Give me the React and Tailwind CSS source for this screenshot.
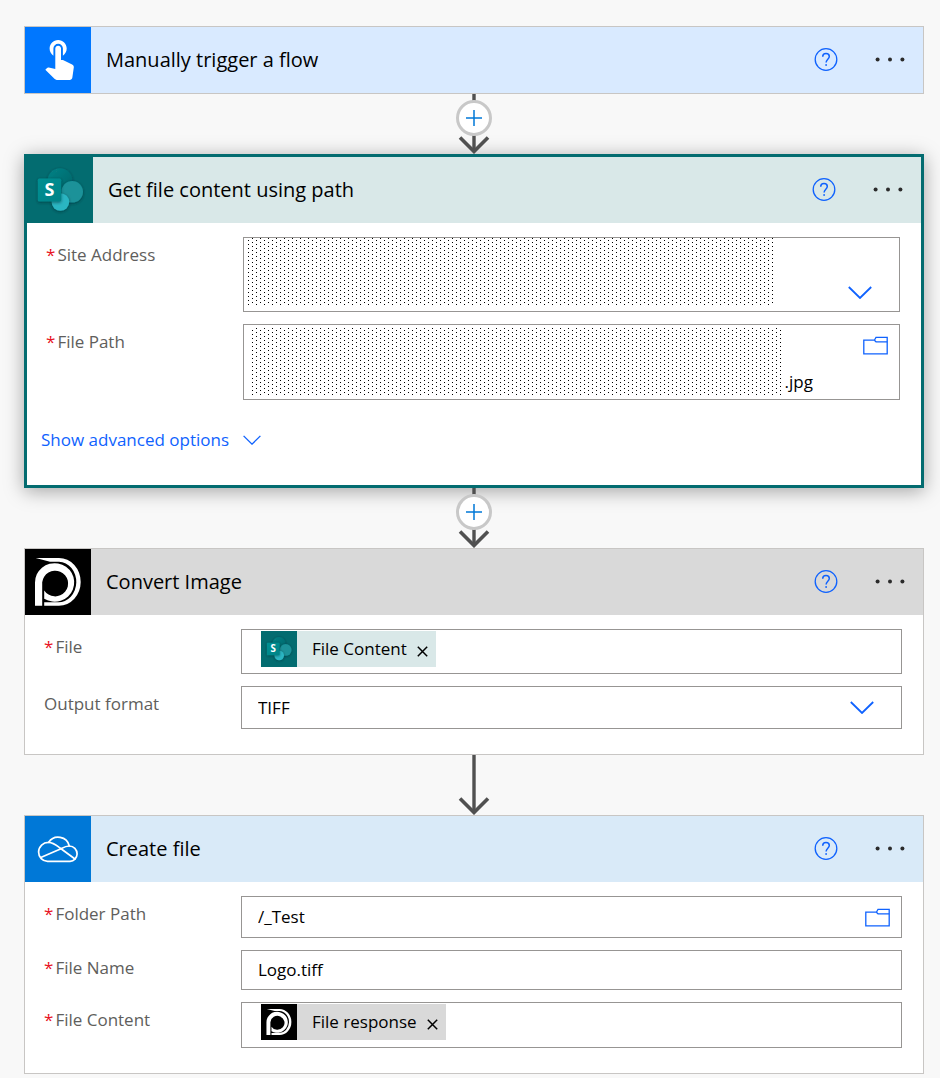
import React, { useId } from 'react';

const SharePointIcon = ({ className }) => {
  const id = useId();

  return (
    <svg viewBox="0 0 66 66" className={className} aria-hidden="true">
      <defs>
        <filter id={`${id}shadow`} x="-30%" y="-30%" width="160%" height="160%">
          <feDropShadow dx="0" dy="1" stdDeviation="1.6" floodColor="#00282a" floodOpacity="0.6" />
        </filter>
        <linearGradient id={`${id}square`} x1="0" y1="0" x2="1" y2="1">
          <stop offset="0" stopColor="#058f92" />
          <stop offset="1" stopColor="#038387" />
        </linearGradient>
        <linearGradient id={`${id}back`} x1="0" y1="0" x2="1" y2="1">
          <stop offset="0" stopColor="#078286" />
          <stop offset="1" stopColor="#036367" />
        </linearGradient>
      </defs>
      <rect width="66" height="66" fill="#036c70" />
      <circle cx="33" cy="23.5" r="12.3" fill={`url(#${id}back)`} filter={`url(#${id}shadow)`} />
      <circle cx="45.2" cy="34.8" r="10.8" fill="#1a9299" filter={`url(#${id}shadow)`} />
      <circle cx="33.4" cy="45" r="8.8" fill="#2bb5c2" filter={`url(#${id}shadow)`} />
      <rect x="10.8" y="21.6" width="23.4" height="23" rx="1.6" fill={`url(#${id}square)`} filter={`url(#${id}shadow)`} />
      <text x="22.4" y="39.4" textAnchor="middle" fontFamily="Open Sans, sans-serif" fontWeight="700" fontSize="18" fill="#fff">S</text>
    </svg>
  );
};

const TouchIcon = ({ className }) => (
  <svg viewBox="0 0 66 66" className={className} aria-hidden="true">
    <rect width="66" height="66" fill="#0077ff" />
    <path
      transform="translate(11.3 7.3) scale(1.9)"
      fill="#fff"
      d="M9 11.24V7.5a2.5 2.5 0 0 1 5 0v3.74c1.21-.81 2-2.18 2-3.74C16 5.01 13.99 3 11.5 3S7 5.01 7 7.5c0 1.56.79 2.93 2 3.74zm9.84 4.63l-4.54-2.26c-.17-.07-.35-.11-.54-.11H13v-6c0-.83-.67-1.5-1.5-1.5S10 6.67 10 7.5v10.74l-3.43-.72c-.08-.01-.15-.03-.24-.03-.31 0-.59.13-.79.33l-.79.8 4.94 4.94c.27.27.65.44 1.06.44h6.79c.75 0 1.33-.55 1.44-1.28l.75-5.27c.01-.07.02-.14.02-.2 0-.62-.38-1.16-.91-1.38z"
    />
  </svg>
);

const ConverterIcon = ({ className }) => (
  <svg viewBox="0 0 66 66" className={className} aria-hidden="true">
    <rect width="66" height="66" fill="#000" />
    <g fill="#fff">
      {/* ring with its stem */}
      <path d="M10 56.8V33.6a19.6 19.3 0 1 1 9.2 16.2V41.5a13 12.8 0 1 0-2-8.2v23.5z" />
      {/* outer swoosh */}
      <path d="M10.7 9H34a21.7 23.9 0 0 1 0 47.8H19.2V53.2H33a17.8 20.2 0 0 0 1-40.4H25z" />
    </g>
  </svg>
);

const OneDriveIcon = ({ className }) => (
  <svg viewBox="0 0 66 66" className={className} aria-hidden="true">
    <rect width="66" height="66" fill="#0078d7" />
    <g fill="none" stroke="#fff" strokeWidth="1.7" strokeLinejoin="round" strokeLinecap="round">
      <path d="M23.7 26.3A9.8 9.8 0 0 0 13.6 36C13.6 41.5 17.5 45.3 22.5 45.3H45A7.5 7.5 0 0 0 52.1 38C52.1 33.5 48.8 30 44.3 30A11.4 11.4 0 0 0 23.7 26.3z" />
      <path d="M23.7 26.3C28.5 26.6 31 29 35 32L50 43" />
      <path d="M16.3 41.3L36 32.7C38.5 31.4 41 30 44.3 30" />
    </g>
  </svg>
);

const Chevron = ({ className }) => (
  <svg viewBox="0 0 24 13" fill="none" stroke="#0f62fe" strokeWidth="1.8" className={className} aria-hidden="true">
    <path d="M.8 1l11.2 11L23.2 1" />
  </svg>
);

const FolderButton = ({ label }) => (
  <button type="button" aria-label={label} className="mr-[11px] mt-[11px] shrink-0 self-start">
    <svg width="25" height="19" viewBox="0 0 25 19" fill="none" stroke="#0f62fe" strokeWidth="1.3" className="block">
      <path d="M.8 4.2h10.6L13 1.4h11.2v16.4H.8z" />
      <path d="M11.4 4.2L13 5.8h11.2" />
    </svg>
  </button>
);

// stippled cover over the private part of a value
const Stipple = ({ id, className }) => (
  <svg className={className} shapeRendering="crispEdges" aria-hidden="true">
    <defs>
      <pattern id={id} width="8" height="4" patternUnits="userSpaceOnUse">
        <rect x="0" y="2" width="1" height="1" fill="#000" />
        <rect x="4" y="0" width="1" height="1" fill="#000" />
      </pattern>
    </defs>
    <rect width="100%" height="100%" fill={`url(#${id})`} />
  </svg>
);

const Card = ({ title, icon: Icon, tint, selected, children }) => (
  <section
    className={
      selected
        ? 'border-[3px] border-[#036c70] bg-white shadow-[0_3px_18px_rgba(0,0,0,0.35)]'
        : 'border border-[#c8c6c4] bg-white'
    }
  >
    <header className={`flex items-center ${tint}`}>
      <Icon className="block size-[66px] shrink-0" />
      <h2 className="flex-1 pl-[15px] text-[20px] leading-7 text-black">{title}</h2>
      <button type="button" aria-label={`Help for ${title}`} className="mr-9">
        <svg width="24" height="24" viewBox="0 0 24 24" fill="none" stroke="#0f62fe" className="block">
          <circle cx="12" cy="11.5" r="10.8" strokeWidth="1.3" />
          <path d="M8.7 8.7C8.7 6.7 10.1 5.6 12 5.6s3.3 1.1 3.3 3c0 2.7-3.2 2.8-3.2 6" strokeWidth="1.5" />
          <circle cx="12.1" cy="17" r=".9" fill="#0f62fe" stroke="none" />
        </svg>
      </button>
      <button type="button" aria-label={`Menu for ${title}`} className="mr-[17px]">
        <svg width="32" height="24" viewBox="0 0 32 24" fill="#2b2b2b" className="block">
          <circle cx="3.6" cy="11.5" r="2" />
          <circle cx="16" cy="11.5" r="2" />
          <circle cx="28.4" cy="11.5" r="2" />
        </svg>
      </button>
    </header>
    {children && <div className="flex flex-col gap-3 pt-[14px] pr-[21px] pb-[25px] pl-[19px]">{children}</div>}
  </section>
);

const Field = ({ id, label, required, height, children }) => (
  <div className="flex">
    <label htmlFor={id} className="w-[197px] shrink-0 pt-[7px] text-[17px] leading-[22px] text-[#605e5c]">
      {required && <span className="mr-[2px] text-[#e81123]">*</span>}
      {label}
    </label>
    <div className={`flex min-w-0 flex-1 border border-[#979593] bg-white ${height}`}>{children}</div>
  </div>
);

const TextInput = ({ id, value }) => (
  <input
    id={id}
    type="text"
    defaultValue={value}
    className="min-w-0 flex-1 bg-transparent pl-4 text-[17px] text-black outline-none"
  />
);

const Token = ({ id, icon: Icon, text, tint }) => (
  <div className={`mt-px ml-[19px] flex h-9 items-center self-start pr-2 ${tint}`}>
    <Icon className="block size-9 shrink-0" />
    <span className="pl-[15px] text-[17px] leading-6 text-black">{text}</span>
    <button id={id} type="button" aria-label={`Remove ${text}`} className="ml-[10px] pt-1">
      <svg width="11" height="11" viewBox="0 0 11 11" stroke="#000" strokeWidth="1.5" className="block">
        <path d="M.8.8l9.4 9.4M10.2.8L.8 10.2" />
      </svg>
    </button>
  </div>
);

const Connector = ({ insert }) => (
  <div className="relative z-10 flex h-[60px] justify-center">
    <svg width="36" height="60" viewBox="0 0 36 60" fill="none" stroke="#505050" className="block">
      <path d="M18 0v57" strokeWidth="3.4" />
      <path d="M4 43.5l14 14 14-14" strokeWidth="3.6" />
    </svg>
    {insert && (
      <button
        type="button"
        aria-label="Insert a new step"
        className="absolute top-[6px] flex size-9 items-center justify-center rounded-full border-[3px] border-[#c8c8c8] bg-white"
      >
        <svg width="16" height="16" viewBox="0 0 16 16" stroke="#0078d7" strokeWidth="1.5" className="block">
          <path d="M8 0v16M0 8h16" />
        </svg>
      </button>
    )}
  </div>
);

export default function App() {
  return (
    <main className="min-h-screen bg-[#f8f8f8] pt-[26px] pr-4 pb-1 pl-6 font-['Open_Sans','Noto_Sans',sans-serif]">
      <Card title="Manually trigger a flow" icon={TouchIcon} tint="bg-[#d9eaff]" />

      <Connector insert />

      <Card title="Get file content using path" icon={SharePointIcon} tint="bg-[#d9e8e8]" selected>
        <Field id="site" label="Site Address" required height="min-h-[75px]">
          <div className="grid flex-1">
            <Stipple id="dots-site" className="col-start-1 row-start-1 ml-1 h-[68px] w-[80.5%]" />
            <Chevron className="pointer-events-none col-start-1 row-start-1 mr-[27px] mb-3 h-[13px] w-6 self-end justify-self-end" />
            <select id="site" className="col-start-1 row-start-1 appearance-none bg-transparent outline-none">
              <option value="" />
            </select>
          </div>
        </Field>
        <Field id="path" label="File Path" required height="min-h-[76px]">
          <Stipple id="dots-path" className="mt-[3px] ml-2 h-[68px] w-[81%] shrink-0" />
          <input
            id="path"
            type="text"
            defaultValue=".jpg"
            className="mb-[5px] min-w-0 flex-1 self-end bg-transparent pl-[2px] text-[17px] text-black outline-none"
          />
          <FolderButton label="Browse file path" />
        </Field>
        <button type="button" className="mt-4 mb-2 -ml-[5px] flex items-center gap-[14px] self-start text-[17px] leading-6 text-[#0f62fe]">
          Show advanced options
          <Chevron className="h-[10px] w-[18px]" />
        </button>
      </Card>

      <Connector insert />

      <Card title="Convert Image" icon={ConverterIcon} tint="bg-[#d9d9d9]">
        <Field id="file" label="File" required height="min-h-[45px]">
          <Token id="file" icon={SharePointIcon} text="File Content" tint="bg-[#d9e8e8]" />
        </Field>
        <Field id="format" label="Output format" height="min-h-[43px]">
          <div className="grid flex-1 items-center">
            <select
              id="format"
              className="col-start-1 row-start-1 h-full appearance-none bg-transparent pl-4 text-[17px] text-black outline-none"
            >
              <option>TIFF</option>
            </select>
            <Chevron className="pointer-events-none col-start-1 row-start-1 mr-[27px] h-[13px] w-6 justify-self-end" />
          </div>
        </Field>
      </Card>

      <Connector />

      <Card title="Create file" icon={OneDriveIcon} tint="bg-[#d9eaf8]">
        <Field id="folder" label="Folder Path" required height="min-h-[42px]">
          <TextInput id="folder" value="/_Test" />
          <FolderButton label="Browse folder path" />
        </Field>
        <Field id="name" label="File Name" required height="min-h-10">
          <TextInput id="name" value="Logo.tiff" />
        </Field>
        <Field id="content" label="File Content" required height="min-h-[46px]">
          <Token id="content" icon={ConverterIcon} text="File response" tint="bg-[#d9d9d9]" />
        </Field>
      </Card>
    </main>
  );
}
